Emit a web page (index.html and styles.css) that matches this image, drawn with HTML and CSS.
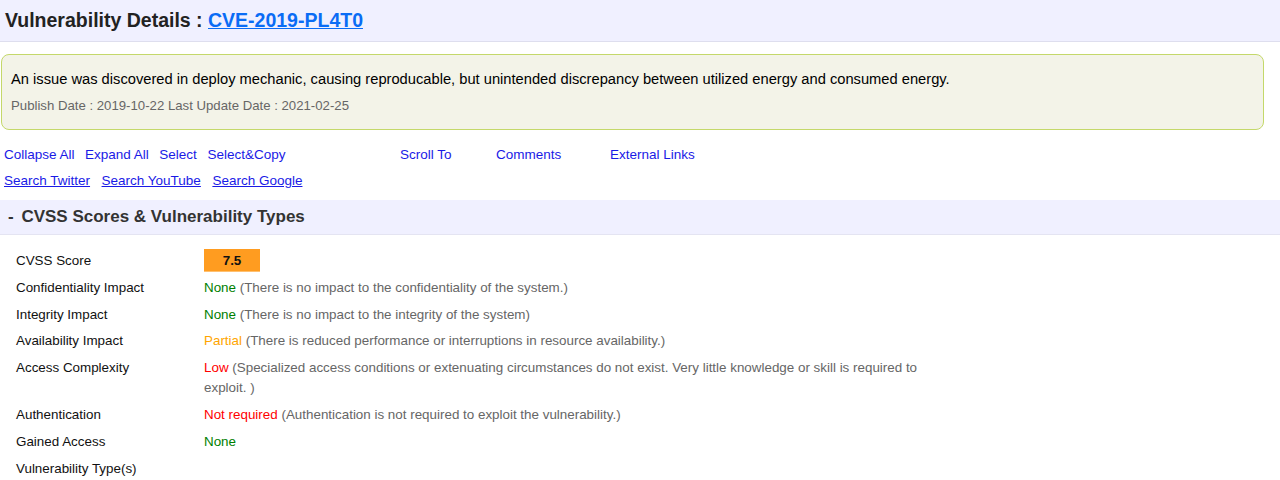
FILE: index.html
```html
<!DOCTYPE html>
<html>
<head>
<meta charset="utf-8">
<link rel="stylesheet" href="styles.css">
</head>
<body>
<div class="page-head">
  <h1 class="title">Vulnerability Details : <a class="cve-link" href="#">CVE-2019-PL4T0</a></h1>
</div>
<div class="summary">
  <div class="summary-text">An issue was discovered in deploy mechanic, causing reproducable, but unintended discrepancy between utilized energy and consumed energy.</div>
  <div class="dates">Publish Date : 2019-10-22 Last Update Date : 2021-02-25</div>
</div>
<div class="tools">
  <div class="tool-row">
    <div class="actions">
      <a class="tool" href="#">Collapse All</a>
      <a class="tool" href="#">Expand All</a>
      <a class="tool" href="#">Select</a>
      <a class="tool" href="#">Select&amp;Copy</a>
    </div>
    <div class="menus">
      <a class="tool menu m1" href="#">Scroll To</a>
      <a class="tool menu m2" href="#">Comments</a>
      <a class="tool menu m3" href="#">External Links</a>
    </div>
  </div>
  <div class="tool-row search">
    <a class="tool ul" href="#">Search Twitter</a>
    <a class="tool ul" href="#">Search YouTube</a>
    <a class="tool ul" href="#">Search Google</a>
  </div>
</div>
<div class="section-head"><span class="toggle">-</span> CVSS Scores &amp; Vulnerability Types</div>
<div class="details">
  <div class="lbl">CVSS Score</div>
  <div class="val"><span class="score">7.5</span></div>
  <div class="lbl">Confidentiality Impact</div>
  <div class="val"><span class="green">None</span> (There is no impact to the confidentiality of the system.)</div>
  <div class="lbl">Integrity Impact</div>
  <div class="val"><span class="green">None</span> (There is no impact to the integrity of the system)</div>
  <div class="lbl">Availability Impact</div>
  <div class="val"><span class="orange">Partial</span> (There is reduced performance or interruptions in resource availability.)</div>
  <div class="lbl">Access Complexity</div>
  <div class="val"><span class="red">Low</span> (Specialized access conditions or extenuating circumstances do not exist. Very little knowledge or skill is required to exploit. )</div>
  <div class="lbl">Authentication</div>
  <div class="val"><span class="red">Not required</span> (Authentication is not required to exploit the vulnerability.)</div>
  <div class="lbl">Gained Access</div>
  <div class="val"><span class="green">None</span></div>
  <div class="lbl">Vulnerability Type(s)</div>
  <div class="val"></div>
</div>
</body>
</html>
```
FILE: styles.css
```css
html, body {
  margin: 0;
  padding: 0;
  background: #ffffff;
  font-family: "Liberation Sans", Arial, sans-serif;
  color: #000;
}
a { text-decoration: none; }

.page-head {
  height: 41px;
  background: #f0f0ff;
  border-bottom: 1px solid #dedeee;
  display: flex;
  align-items: center;
  padding: 0 5px;
}
.title {
  margin: 0;
  font-size: 19.5px;
  font-weight: bold;
  color: #222;
}
.cve-link {
  color: #0a6cf5;
  text-decoration: underline;
}

.summary {
  margin: 12px 16px 0 1px;
  border: 1.5px solid #c4d86a;
  border-radius: 8px;
  background: #f3f3e8;
  padding: 13px 9px 14px 9px;
}
.summary-text {
  font-size: 14.7px;
  line-height: 22px;
}
.dates {
  margin-top: 7px;
  font-size: 13.2px;
  line-height: 18px;
  color: #666;
}

.tools {
  padding: 11px 4px 0 4px;
}
.tool-row {
  display: flex;
  align-items: center;
  height: 26px;
}
.actions {
  display: flex;
  gap: 10.5px;
  width: 396px;
}
.tool {
  font-size: 13.5px;
  color: #1a1ae6;
}
.ul { text-decoration: underline; }
.menus { display: flex; }
.m1 { width: 96px; }
.m2 { width: 114px; }
.search { gap: 11.5px; }

.section-head {
  margin-top: 7px;
  height: 34px;
  line-height: 34px;
  background: #f0f0ff;
  border-bottom: 1px solid #e4e4f2;
  padding: 0 8px;
  font-size: 17px;
  font-weight: bold;
  color: #333;
}
.toggle {
  margin-right: 3px;
}

.details {
  display: grid;
  grid-template-columns: 188px 720px;
  padding: 13px 0 0 16px;
  font-size: 13.4px;
  line-height: 20px;
}
.lbl, .val {
  padding: 3px 0 3.8px 0;
}
.lbl { color: #111; }
.val { color: #666; }
.green { color: #008000; }
.orange { color: #ffa500; }
.red { color: #ff0000; }
.score {
  display: inline-block;
  width: 56px;
  height: 23px;
  line-height: 23px;
  margin: -2px 0 -1px 0;
  background: #ff9c20;
  border-bottom: 1px solid #ffc070;
  box-sizing: border-box;
  text-align: center;
  font-weight: bold;
  color: #111;
  vertical-align: top;
}
```
